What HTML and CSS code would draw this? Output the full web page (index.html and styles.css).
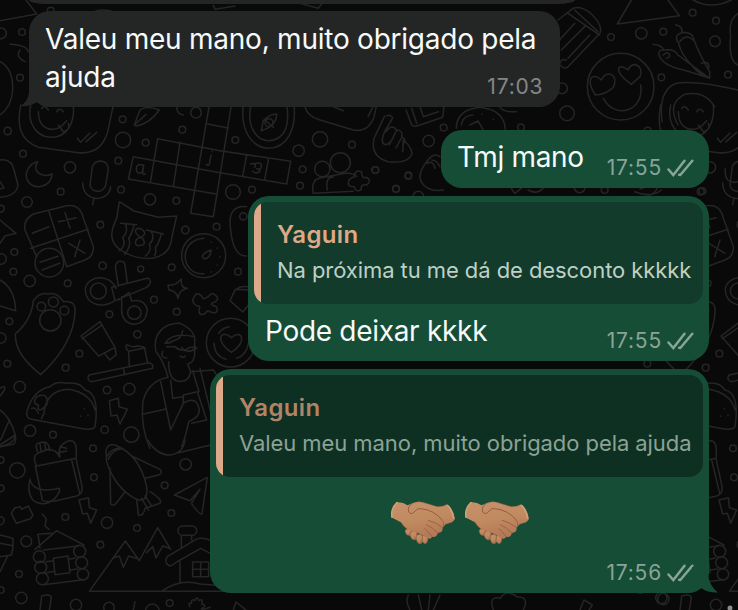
FILE: index.html
```html
<!DOCTYPE html>
<html lang="pt-BR">
<head>
<meta charset="utf-8">
<title>Conversa</title>
<link rel="stylesheet" href="styles.css">
</head>
<body>
<svg class="wallpaper" width="738" height="610" viewBox="0 0 738 610" aria-hidden="true">
  <defs>
    <g id="tile">
      <!-- face, moon, microphone, crossword, calculator, cat, stopwatch -->
      <g transform="translate(0 90) scale(.33333)">
        <path d="M62 45C50 110 60 150 115 172L235 188Q300 195 322 130L340 45M92 45C80 100 110 142 155 142C200 142 225 100 220 45M115 65C115 125 165 125 185 108L200 92M175 105l15 20q22-5 15-25M125 55q10-12 20 5M170 65q8-15 20 0M232 145l10 12 28-28M258 155l32-28"/>
        <path d="M113 215C85 220 75 250 80 265C92 305 155 295 156 252C125 265 95 245 113 215Z"/>
        <path d="M277 230q8-20 30-16q20 5 17 30l-7 42q-7 20-28 18q-22-5-18-28zM248 278c0 62 80 60 84 12M282 324l-4 20"/>
        <path d="M628 45L572 370l68 10L694 45M622 102l62 12M473 146L660 182M400 200L660 248M385 267l263 45M473 146l-22 132M540 157l-20 132M400 200l-15 67"/>
        <path d="M427 225q-18-5-18 12t18 10l4-22-3 26q5 5 8 0M633 195l-5 28q-4 6-9 0M636 184v1"/>
        <path d="M75 420Q68 390 100 372L200 347Q235 342 246 372L280 470Q282 500 255 510L200 530M75 420L110 500M147 365L200 530M92 475L264 418M97 430l50-20M175 395l54-12M195 368l15 46M207 460l48 30M240 450l-16 50M120 517l54-18M127 540l52-20"/>
        <circle cx="148" cy="518" r="43"/>
        <path d="M358 335L402 363L475 382L530 378L516 440C510 520 420 515 370 485C325 460 330 425 350 385ZM362 400l48 4M440 420l50 12M376 402q10 25-8 40 12 25-10 40M402 405q-6 25-16 40 10 20-12 48M454 425q12 20-6 38 8 20-12 35M484 432q-8 30-18 40 4 15-2 24M422 442c-30-20-10-35 6-22c15 10-2 22-6 22c-20 5-22 30 0 24c18 0 10-20 0-24"/>
        <circle cx="611" cy="497" r="66"/><path d="M612 445c-80 5-70 112 0 106M607 500q2-12 26-20q0 22-20 27zM634 455v1M652 474v1M660 500v1M652 525v1M634 545v1"/>
        <path d="M0 210Q35 205 42 240L54 285Q50 318 0 322M0 275l12 18-12 4M0 390L48 430L15 438L0 460"/>
        <path d="M403 105L420 60Q440 45 478 60Q450 100 410 108ZM403 105l35-32M530 50q0 22 20 25M740 350Q680 345 692 420Q700 500 740 498"/>
        <g class="dots"><circle cx="23" cy="123" r="11"/><circle cx="69" cy="191" r="10"/><circle cx="210" cy="232" r="17"/><circle cx="182" cy="305" r="10"/><circle cx="81" cy="336" r="16"/><circle cx="369" cy="150" r="23"/><circle cx="368" cy="88" r="10"/><circle cx="437" cy="158" r="10"/><circle cx="355" cy="212" r="10"/><circle cx="363" cy="299" r="10"/><circle cx="450" cy="328" r="17"/><circle cx="529" cy="332" r="10"/><circle cx="547" cy="119" r="10"/><circle cx="588" cy="68" r="16"/><circle cx="301" cy="404" r="10"/><circle cx="43" cy="486" r="10"/><circle cx="40" cy="545" r="10"/><circle cx="3" cy="507" r="16"/><circle cx="89" cy="573" r="17"/><circle cx="203" cy="580" r="10"/><circle cx="308" cy="527" r="11"/><circle cx="422" cy="537" r="9"/><circle cx="515" cy="532" r="10"/><circle cx="556" cy="420" r="11"/><circle cx="650" cy="410" r="10"/><circle cx="730" cy="379" r="11"/><circle cx="714" cy="545" r="10"/><circle cx="2" cy="356" r="10"/></g>
      </g>
      <!-- guitar pick paw, toothbrush, taco, reader -->
      <g transform="translate(0 280) scale(.33333)">
        <path d="M46 162Q95 120 100 62Q120 35 145 42Q170 35 190 65Q228 60 225 95C222 170 180 230 122 284C75 245 45 210 46 162Z"/>
        <circle cx="151" cy="121" r="32"/><circle cx="124" cy="80" r="13"/><circle cx="160" cy="66" r="15"/><circle cx="193" cy="92" r="13"/>
        <path d="M0 0Q45 25 47 92L0 78M348 25C330-20 265-15 256 25C255 70 300 90 345 62L440 22Q460 5 445-6L335 22M345 62L335 22M355 18L346-40Q350-58 362-56Q374-56 375-44L382 8M355 60l32-22 8 25C435 55 445 85 440 100C430 150 360 140 365 85L365 50"/>
        <circle cx="295" cy="33" r="24"/><circle cx="403" cy="98" r="20"/>
        <path d="M243 168L300 125L345 202L296 228ZM247 176l58-40M345 202l4 22-20 16-14-18M267 285L445 248Q462 250 458 265L275 305Q258 300 267 285ZM370 264l4 20M388 258l-2-44q-12-10-6-20 20 10 30 4 28 0 25 12l8 40M386 214l48-10"/>
        <path d="M504 15q22 4 40-18q-3 28 18 28q-25 5-28 30q-3-22-28-26zM583 50q8-18 24 0q0 12 18 0q10-16 24-2q12 14-14 22q-5 4 14 10q10 24-18 16q-8-8-16 5q-20 8-18-12q8-12-8-12q-18-12-6-27zM690 62L706 28L750 30M690 62L728 96L750 70M712 30q0-12 30-10"/>
        <circle cx="692" cy="188" r="73"/><path d="M694 217C640 180 665 145 694 173C725 145 745 185 694 217ZM656 160q12-18 32-20M642 190q2 40 36 48M745 190q-5 35-35 45"/>
        <path d="M504 292Q490 240 468 215C455 160 495 128 540 130Q575 145 584 170Q515 155 495 190Q512 190 520 182Q545 178 548 152M584 170V225Q580 250 563 252L572 275Q567 310 530 303Q505 292 506 245M488 214q-8 20 12 20M500 200h25q20 20 45 2h18M545 202q15 22 45 2M540 228q8 8 16 0"/>
        <path d="M504 292Q440 305 428 370Q422 445 450 505M482 305L512 450L550 370V345L592 335L620 420L575 430M512 300L518 355L550 350M578 272L597 335M572 275L640 270L660 300M550 370Q590 345 598 390Q600 410 566 425Q560 460 545 500M428 403L495 388M600 265L640 430"/>
        <path d="M82 390Q100 330 150 320Q168 302 200 310Q240 305 255 330Q300 340 285 440Q280 452 240 445L95 418Q75 415 82 390ZM132 400Q138 330 208 328Q272 340 285 390M132 400l-8 16M110 350q38-15 30 25q-30 30-25 0q-20-5-5-25M95 385q12-5 20 15M253 385v1M242 408v1M264 405v1"/>
        <path d="M328 362l27-7 2 25 25 8-22 44-9-27-18 3zM0 390Q30 410 46 465Q45 490 0 500M46 465L0 495M28 420l-26 60M0 325q20-12 12 7l-12 16"/>
        <g class="dots"><circle cx="28" cy="124" r="10"/><circle cx="2" cy="174" r="16"/><circle cx="22" cy="251" r="10"/><circle cx="59" cy="321" r="17"/><circle cx="197" cy="263" r="10"/><circle cx="238" cy="221" r="10"/><circle cx="328" cy="103" r="10"/><circle cx="412" cy="163" r="11"/><circle cx="462" cy="59" r="10"/><circle cx="530" cy="95" r="10"/><circle cx="321" cy="330" r="11"/><circle cx="388" cy="327" r="17"/><circle cx="394" cy="464" r="23"/><circle cx="314" cy="449" r="11"/><circle cx="159" cy="464" r="10"/><circle cx="90" cy="452" r="17"/></g>
      </g>
      <!-- lunch bag, rocket, plane, cabin, mountains -->
      <g transform="translate(0 440) scale(.33333)">
        <path d="M106 78L127 180Q130 187 165 183L230 168Q250 160 246 140L228 55L110 78Q95 50 112 40L145 28Q170 30 178 50M215 60l24 100M112 34l-4-16q0-10 25-12 14 2 16 26M120 10l3 22M134 8l3 20M180 50Q170 20 200 5Q235-10 228 55M180 20l20 5M175 38l25-5"/>
        <path d="M90 118Q100 162 178 145Q182 155 165 175Q130 205 98 180Q80 155 90 118Z"/>
        <path d="M318 35Q320 10 345 15Q420 45 440 140Q445 190 410 178Q345 145 320 65ZM325 58q12-30 42-32M322 48q10-20 35-24M395 48L480 88Q490 100 475 105L436 115M330 85L332 192Q340 200 350 188L375 155M410 178L415 225Q430 230 435 205L450 200 480 190Q490 180 450 155M425 175l20 35M435 168l20 30"/>
        <path d="M523 165L622 112L606 222Q600 226 574 190L600 148L570 182ZM443 0Q470 45 510 45Q550 40 555 0M535 38L632 15M0 20L42 12Q50 5 45-15"/>
        <path d="M237 180l28-7 3 30 22 7-18 40-10-30-14 2zM34 220l10-16 16-4 5 8 20-10 14 28-8 10-42 14zM127 222l12 14-4 22 12 10"/>
        <path d="M105 328L170 272L252 315M120 325l-6-42 40-3M130 330l105-12M138 365l22-3M205 358l22-4M138 398l25-4M208 390l25-3M130 434L245 420M160 355l44-7 6 50-45 6z"/>
        <circle cx="118" cy="350" r="18"/><circle cx="122" cy="382" r="18"/><circle cx="127" cy="416" r="18"/><circle cx="239" cy="334" r="18"/><circle cx="245" cy="368" r="18"/><circle cx="249" cy="403" r="17"/>
        <path d="M750 454H268L376 303L418 362L473 263L512 328M338 354l20-6 12 34 16-34 28 8M440 338l18-18 10 34 20-36 18 6M502 350L588 298Q605 290 635 302M502 350Q490 370 510 378Q518 376 530 366L602 325L650 350M540 365v62M544 290v30M575 285v15M485 454Q540 415 600 432L650 436M578 366h48v44h-48zM602 366v44M578 388h48"/>
        <rect x="534" y="258" width="56" height="28" rx="14"/>
        <path d="M0 285L38 295Q42 320 34 345L0 350M0 310L38 317M22 350L0 395M120 510L125 468Q150 460 154 472L148 510M400 510L405 485M570 500q-8-12 5-10q-3-16 10-8q5-18 12 0q14-8 8 10q18 4 0 14M605 510l25-8M700 510l8-24 30 24"/>
        <g class="dots"><circle cx="52" cy="91" r="23"/><circle cx="279" cy="25" r="10"/><circle cx="282" cy="112" r="10"/><circle cx="196" cy="231" r="10"/><circle cx="321" cy="248" r="17"/><circle cx="411" cy="264" r="10"/><circle cx="301" cy="314" r="10"/><circle cx="494" cy="136" r="10"/><circle cx="514" cy="219" r="10"/><circle cx="557" cy="73" r="17"/><circle cx="79" cy="304" r="16"/><circle cx="57" cy="402" r="10"/><circle cx="64" cy="474" r="17"/><circle cx="228" cy="495" r="17"/><circle cx="327" cy="503" r="16"/><circle cx="509" cy="489" r="10"/><circle cx="2" cy="60" r="10"/><circle cx="2" cy="145" r="10"/><circle cx="0" cy="242" r="12"/><circle cx="2" cy="450" r="10"/><circle cx="457" cy="512" r="20"/></g>
      </g>
    </g>
  </defs>
  <use href="#tile"/>
  <use href="#tile" x="640"/>
  <!-- compass, people, fists -->
  <g transform="translate(220 90) scale(.33333)">
    <path d="M70 45C60 120 95 173 146 175C200 173 230 120 222 45M92 50C80 110 110 152 146 152C195 150 210 105 200 45M124 122L130 92Q150 72 170 72Q170 108 124 122ZM135 90l25 22"/>
    <circle cx="147" cy="98" r="12"/>
    <path d="M0 182L212 214L200 282L0 248M80 195l-12 64M146 205l-12 64M92 222q20-6 12 10M102 222q24-8 22 8q0 10-14 6q14 4 8 10q-12 6-20-2"/>
    <path d="M255 50Q262 80 300 90L400 120Q445 128 462 80L470 45M340 50l30 12"/>
    <circle cx="307" cy="237" r="23"/><circle cx="361" cy="218" r="30"/>
    <path d="M280 310Q272 270 300 264L375 250Q402 248 410 260M280 310L400 304M322 300Q315 260 340 262M402 262Q405 236 425 246Q425 268 438 262Q458 270 440 285Q420 282 424 298Q410 310 402 290Q380 292 386 272Q395 260 402 262Z"/>
    <path d="M500 78Q512 72 518 84L494 125Q478 162 498 164Q515 160 522 135M462 145Q450 200 505 215Q570 222 576 188Q570 165 550 150L548 185M494 78L462 145M498 125Q515 100 530 120L508 164M530 120Q550 120 545 142L528 174M545 142Q562 145 548 165"/>
    <path d="M558 60L575 105Q580 112 600 105L668 82L672 50M575 55l15 45M600 50l10 30 45-15M660 200Q640 185 620 215Q580 265 620 292Q640 305 670 300M620 220q20-10 25 15M635 210q15 0 25 20"/>
    <circle cx="300" cy="148" r="23"/><circle cx="236" cy="182" r="17"/><circle cx="46" cy="150" r="10"/><circle cx="248" cy="238" r="10"/><circle cx="240" cy="287" r="10"/><circle cx="39" cy="306" r="22"/><circle cx="96" cy="299" r="10"/><circle cx="396" cy="164" r="10"/><circle cx="466" cy="240" r="10"/><circle cx="565" cy="258" r="10"/><circle cx="528" cy="296" r="10"/><circle cx="626" cy="153" r="17"/><circle cx="671" cy="113" r="10"/><circle cx="595" cy="320" r="16"/>
  </g>
  <!-- pencil, loving face, chillies -->
  <g transform="translate(368 0) scale(.33333)">
    <path d="M570 60L615 25Q640 15 670 42Q705 75 696 100L600 200Q590 210 575 195M600 40L695 105M620 30L690 95M570 125L620 70M580 150L650 80M600 175L665 105M575 195q0-20 20-15M790 0L748 72L934 47L900 0M975 0Q1030 30 1090 0M1110 40Q1080 60 1088 110Q1080 180 1110 195"/>
    <circle cx="758" cy="260" r="100"/>
    <path d="M682 285C650 235 675 215 700 240C715 205 755 225 736 262Q710 285 682 285ZM790 253C730 210 752 185 780 210C790 180 830 195 816 230ZM706 295C740 360 830 335 818 255"/>
    <path d="M855 133Q880 135 888 150Q920 145 930 165L1025 235Q950 210 925 205Q880 190 873 165Q868 150 888 150M923 75Q945 78 942 98Q975 95 978 120Q995 165 1025 215V235Q990 220 975 200Q940 165 932 130Q915 105 942 98M885 165q20-15 20 5l-10 5M935 125q20-25 40-5M1000 190q25-8 22 12"/>
    <path d="M882 365Q870 270 925 250Q980 240 1110 270M265 385Q265 330 335 322Q410 330 412 390M280 375q5-30 35-30M305 375l25-12 15 25M342 341v1M376 358v1M395 320q10 18 50 15M0 350l15-30"/>
    <path d="M930 375Q895 310 950 283Q1010 270 1040 320"/>
    <path d="M430 560l10 15 20-15M480 565q30 15 45-5M800 570q50 20 80-5M1110 540Q1068 550 1072 500" transform="translate(0 5)"/>
    <circle cx="820" cy="100" r="17"/><circle cx="886" cy="95" r="10"/><circle cx="729" cy="111" r="10"/><circle cx="974" cy="38" r="10"/><circle cx="1044" cy="62" r="10"/><circle cx="1041" cy="124" r="16"/><circle cx="880" cy="232" r="10"/><circle cx="1080" cy="224" r="10"/><circle cx="597" cy="340" r="22"/><circle cx="582" cy="265" r="16"/><circle cx="459" cy="382" r="10"/><circle cx="22" cy="510" r="10"/><circle cx="121" cy="526" r="10"/><circle cx="84" cy="567" r="10"/><circle cx="1003" cy="573" r="10"/><circle cx="710" cy="570" r="10"/><circle cx="635" cy="562" r="16"/>
  </g>
  <!-- strip beside the incoming messages and along the bottom -->
  <g transform="scale(.33333)">
    <path d="M0 62L110 42L78 0M30 133Q80 135 85 155M60 150q-15 20 15 35M0 185Q40 205 38 270Q35 320 0 345M640 16l5 12 60-10M900 10l55 15 15-20M280 35q30-10 60 0"/>
    <circle cx="66" cy="96" r="10"/><circle cx="3" cy="100" r="16"/><circle cx="60" cy="233" r="10"/><circle cx="152" cy="32" r="10"/>
    <path d="M1225 1785q-10 20 5 45M1255 1785l10 45M1290 1785l-5 45M1320 1785l-20 45M1480 1830Q1465 1785 1500 1795Q1520 1765 1550 1790Q1590 1790 1570 1830M1740 1830l12-30 25 15-10 15"/>
    <circle cx="1990" cy="1797" r="17"/>
  </g>
  <circle class="spark" cx="730" cy="608" r="2.5"/>
</svg>

<svg class="symbols" width="0" height="0" aria-hidden="true">
  <symbol id="ticks" viewBox="0 0 27 18">
    <path d="M1.5 10.5L6.3 16L17.5 1.8M12.2 15.8L13.3 16L25.3 1.8"/>
  </symbol>
  <linearGradient id="skin" x1="0" y1="0" x2=".3" y2="1">
    <stop offset="0" stop-color="#c6926b"/><stop offset=".6" stop-color="#c08a60"/><stop offset="1" stop-color="#b47a57"/>
  </linearGradient>
  <symbol id="shake" viewBox="18 28 194 132">
    <g fill="url(#skin)" stroke="#ad7052" stroke-width="1.5">
      <path d="M82 35Q100 26 120 33L158 45Q174 46 188 38Q206 50 211 82Q207 92 194 94Q182 96 179 102L150 128L95 80Z"/>
      <path d="M62 116Q72 103 80 118Q87 132 74 132Q60 130 62 116Z"/>
      <path d="M78 122Q92 114 97 126Q100 145 88 145Q74 142 78 122Z"/>
      <path d="M96 132Q108 124 114 136Q116 157 105 157Q93 154 96 132Z"/>
      <path d="M114 134Q126 126 129 137Q130 157 120 156Q111 153 114 134Z"/>
      <path stroke="none" d="M37 31Q54 30 68 40L82 35L120 48L174 88Q184 102 174 108Q177 123 160 124Q156 139 143 136Q137 146 126 139L100 124Q82 122 66 112Q55 104 48 92L20 77Q18 50 37 31Z"/>
    </g>
    <g fill="none" stroke="#965a3f" stroke-width="3" stroke-linecap="round">
      <path d="M82 35Q66 45 72 61Q80 71 91 58Q98 47 111 51Q145 54 171 82"/>
      <path d="M131 86Q153 91 174 108M125 99Q145 108 160 124M121 111Q132 121 143 136M171 82Q182 92 177 104" stroke-width="2.5"/>
      <path d="M49 93Q58 108 68 113M80 118q-2 7-6 12M97 126q-1 10-7 17M113 136q0 10-5 18" stroke-width="2"/>
      <path d="M21 76Q17 50 36 32M190 41Q204 55 208 80" stroke="#d0a077" stroke-width="5"/>
    </g>
  </symbol>
</svg>

<main class="chat">
  <div class="bubble bubble-in bubble-previous"></div>

  <div class="bubble bubble-in bubble-thanks">
    <p class="text">Valeu meu mano, muito obrigado pela<br>ajuda</p>
    <span class="meta"><time>17:03</time></span>
    <svg class="tail tail-in" viewBox="0 0 24 22"><path d="M9 0V8Q7 18 0 21Q10 22 17 17L24 22V0Z"/></svg>
  </div>

  <div class="bubble bubble-out bubble-short">
    <p class="text text-short">Tmj mano</p>
    <span class="meta"><time>17:55</time><svg class="ticks"><use href="#ticks"/></svg></span>
  </div>

  <div class="bubble bubble-out bubble-reply">
    <blockquote class="quote">
      <strong class="author">Yaguin</strong>
      <span class="quoted quoted-discount">Na próxima tu me dá de desconto kkkkk</span>
    </blockquote>
    <div class="row">
      <p class="text text-reply">Pode deixar kkkk</p>
      <span class="meta"><time>17:55</time><svg class="ticks"><use href="#ticks"/></svg></span>
    </div>
  </div>

  <div class="bubble bubble-out bubble-emoji">
    <blockquote class="quote quote-dim">
      <strong class="author">Yaguin</strong>
      <span class="quoted">Valeu meu mano, muito obrigado pela ajuda</span>
    </blockquote>
    <div class="emoji-row" role="img" aria-label="🤝🏽🤝🏽">
      <svg class="emoji"><use href="#shake"/></svg>
      <svg class="emoji"><use href="#shake"/></svg>
    </div>
    <span class="meta"><time>17:56</time><svg class="ticks"><use href="#ticks"/></svg></span>
    <svg class="tail tail-out" viewBox="0 0 28 26"><path d="M16 0V8Q18 20 26 25.5Q16 26 9 21Q5 24 0 25V0Z"/></svg>
  </div>
</main>
</body>
</html>
```

FILE: styles.css
```css
* { box-sizing: border-box; }

body {
  margin: 0;
  width: 738px;
  height: 610px;
  overflow: hidden;
  background: #090909;
  color: #f7faf8;
  font-family: Inter, "Liberation Sans", sans-serif;
}

.wallpaper {
  position: absolute;
  inset: 0;
  fill: none;
  stroke: #252525;
  stroke-width: 4.6;
  stroke-linecap: round;
  stroke-linejoin: round;
}

.spark { fill: #8b8b8b; stroke: none; }

.symbols { position: absolute; }

.chat {
  position: relative;
  display: flex;
  flex-direction: column;
  align-items: flex-end;
  height: 610px;
  padding: 0 29px;
}

.bubble {
  position: relative;
  display: flex;
  flex: none;
  border-radius: 21px;
}

.bubble-in { align-self: flex-start; background: #242626; }
.bubble-out { background: #154d37; }

.bubble-previous {
  width: 546px;
  height: 4px;
  margin-bottom: 7px;
  border-radius: 0 0 18px 18px / 0 0 4px 4px;
}

.bubble-thanks {
  width: 531px;
  height: 96px;
  margin-bottom: 23px;
  padding: 9px 16px 0;
}

.text {
  margin: 0;
  font-size: 28px;
  line-height: 38px;
  letter-spacing: -0.24px;
  white-space: nowrap;
}

.text-short, .text-reply { letter-spacing: -0.3px; }

.meta {
  display: flex;
  align-items: center;
  align-self: flex-end;
  gap: 5px;
  margin-left: auto;
  color: #88a598;
  font-size: 21px;
  line-height: 24px;
  letter-spacing: 0.8px;
}

.bubble-thanks .meta {
  margin-left: -49px;
  padding-bottom: 8px;
  color: #858787;
}

.ticks {
  width: 27px;
  height: 18px;
  fill: none;
  stroke: #88a598;
  stroke-width: 2.5;
  stroke-linecap: round;
}

.bubble-short {
  width: 268px;
  height: 58px;
  margin-bottom: 8px;
  padding: 8px 15px 8px 16px;
}

.bubble-reply {
  flex-direction: column;
  width: 461px;
  height: 165px;
  margin-bottom: 8px;
  padding: 6px 6px 0;
}

.quote {
  display: flex;
  flex-direction: column;
  flex: none;
  height: 102px;
  margin: 0;
  padding: 16px 0 0 16px;
  border-radius: 14px;
  background: linear-gradient(90deg, #dda988 7px, #123b2b 7px);
}

.quote-dim { background: linear-gradient(90deg, #dda988 7px, #0e3022 7px); }

.author {
  color: #dda988;
  font-size: 24px;
  font-weight: 600;
  line-height: 34px;
  letter-spacing: 0.35px;
}

.quoted {
  color: #bfd0c7;
  font-size: 22px;
  line-height: 36px;
  letter-spacing: -0.07px;
  white-space: nowrap;
}

.quote > * { padding-left: 7px; }
.quote-dim .author { color: #b18468; }
.quote-dim .quoted { color: #8ba397; }

.row {
  display: flex;
  height: 57px;
  padding: 8px 9px 8px 11px;
}

.bubble-emoji {
  flex-direction: column;
  width: 499px;
  height: 224px;
  padding: 6px 6px 8px;
}

.emoji-row {
  display: flex;
  justify-content: center;
  gap: 10px;
  margin-top: 24px;
}

.emoji { width: 64px; height: 44px; }

.bubble-emoji .meta { margin-top: auto; margin-right: 9px; }

.tail { position: absolute; bottom: 0; }
.tail-in { left: -9px; width: 24px; height: 22px; fill: #242626; }
.tail-out { right: -11px; width: 28px; height: 26px; fill: #154d37; }
```
